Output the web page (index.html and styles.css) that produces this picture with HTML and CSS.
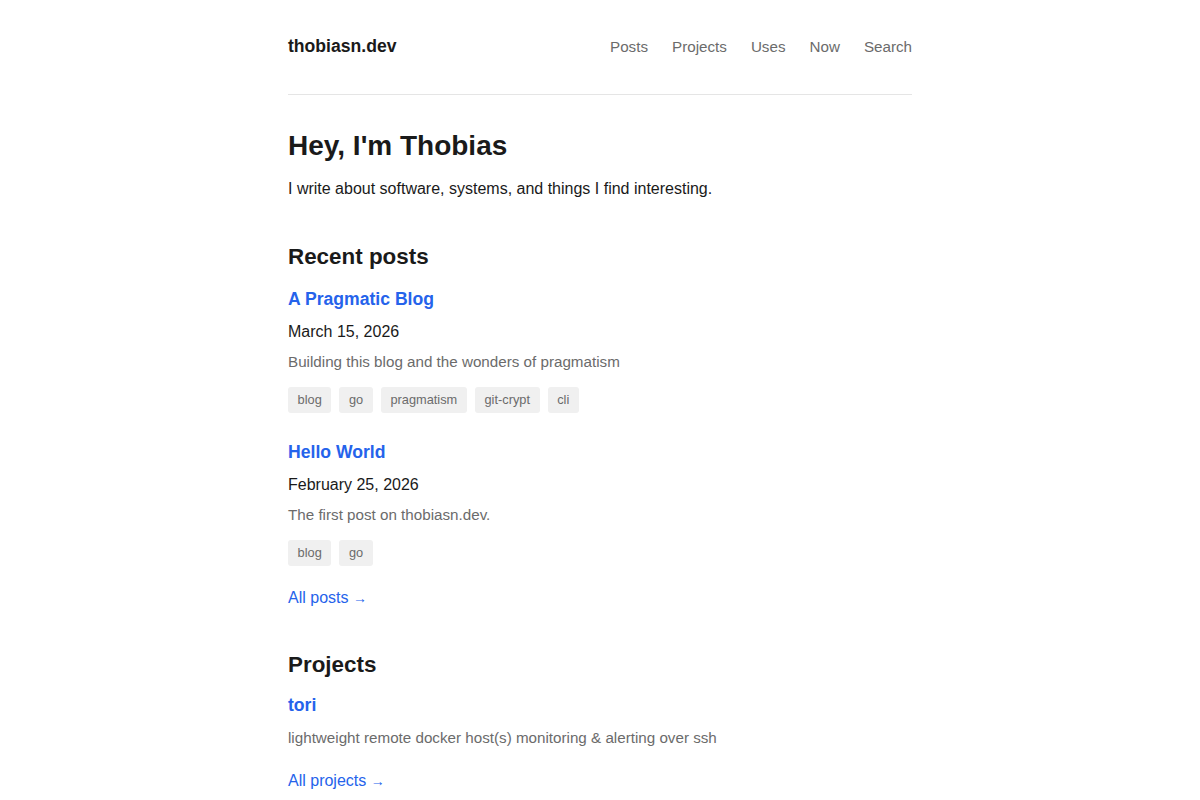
FILE: index.html
```html
<!DOCTYPE html>
<html lang="en">
<head>
<meta charset="utf-8">
<title>thobiasn.dev</title>
<link rel="stylesheet" href="styles.css">
</head>
<body>
<div class="page">
  <header class="site-header">
    <a class="logo" href="#">thobiasn.dev</a>
    <nav class="nav">
      <a href="#">Posts</a>
      <a href="#">Projects</a>
      <a href="#">Uses</a>
      <a href="#">Now</a>
      <a href="#">Search</a>
    </nav>
  </header>
  <main>
    <section class="intro">
      <h1>Hey, I'm Thobias</h1>
      <p>I write about software, systems, and things I find interesting.</p>
    </section>

    <section class="section">
      <h2>Recent posts</h2>
      <article class="post">
        <a class="post-title" href="#">A Pragmatic Blog</a>
        <div class="post-date">March 15, 2026</div>
        <p class="post-desc">Building this blog and the wonders of pragmatism</p>
        <ul class="tags">
          <li>blog</li><li>go</li><li>pragmatism</li><li>git-crypt</li><li>cli</li>
        </ul>
      </article>
      <article class="post">
        <a class="post-title" href="#">Hello World</a>
        <div class="post-date">February 25, 2026</div>
        <p class="post-desc">The first post on thobiasn.dev.</p>
        <ul class="tags">
          <li>blog</li><li>go</li>
        </ul>
      </article>
      <a class="more" href="#">All posts <span class="arrow">→</span></a>
    </section>

    <section class="section projects">
      <h2>Projects</h2>
      <article class="project">
        <a class="post-title" href="#">tori</a>
        <p class="post-desc">lightweight remote docker host(s) monitoring &amp; alerting over ssh</p>
      </article>
      <a class="more" href="#">All projects <span class="arrow">→</span></a>
    </section>
  </main>
</div>
</body>
</html>
```

FILE: styles.css
```css
* { box-sizing: border-box; }
html, body { margin: 0; padding: 0; background: #fff; }
body {
  font-family: "Liberation Sans", Arial, sans-serif;
  color: #1a1a1a;
}
a { text-decoration: none; }
.page {
  width: 624px;
  margin: 0 auto;
}
.site-header {
  display: flex;
  justify-content: space-between;
  align-items: center;
  padding: 33px 0 34px;
  border-bottom: 1px solid #e5e5e5;
}
.logo {
  font-size: 17.6px;
  line-height: 27px;
  font-weight: 700;
  color: #1a1a1a;
}
.nav {
  display: flex;
  gap: 24px;
}
.nav a {
  font-size: 15.2px;
  line-height: 22px;
  color: #6b6b6b;
}
.intro { margin-top: 33px; }
h1 {
  margin: 0;
  font-size: 28px;
  line-height: 36px;
  font-weight: 700;
}
.intro p {
  margin: 13px 0 0;
  font-size: 16px;
  line-height: 24px;
}
.section { margin-top: 42px; }
.section.projects { margin-top: 41px; }
h2 {
  margin: 0;
  font-size: 22.4px;
  line-height: 28px;
  font-weight: 700;
}
.post { margin-top: 16px; }
.project { margin-top: 14px; }
.post + .post { margin-top: 27px; }
.post-title {
  display: block;
  font-size: 17.6px;
  line-height: 25px;
  font-weight: 700;
  color: #2563eb;
}
.post-date {
  margin-top: 8px;
  font-size: 16px;
  line-height: 24px;
}
.post-desc {
  margin: 7px 0 0;
  font-size: 15.2px;
  line-height: 22px;
  color: #6b6b6b;
}
.project .post-desc { margin-top: 9px; }
.tags {
  list-style: none;
  margin: 14px 0 0;
  padding: 0;
  display: flex;
  flex-wrap: wrap;
  gap: 8px;
}
.tags li {
  font-size: 12.8px;
  line-height: 26px;
  height: 26px;
  padding: 0 9.6px;
  background: #f0f0f0;
  color: #6b6b6b;
  border-radius: 3px;
}
.more {
  display: inline-block;
  margin-top: 20px;
  font-size: 16px;
  line-height: 24px;
  color: #2563eb;
}
.project + .more { margin-top: 20px; }
.arrow { font-size: 14px; }
```
